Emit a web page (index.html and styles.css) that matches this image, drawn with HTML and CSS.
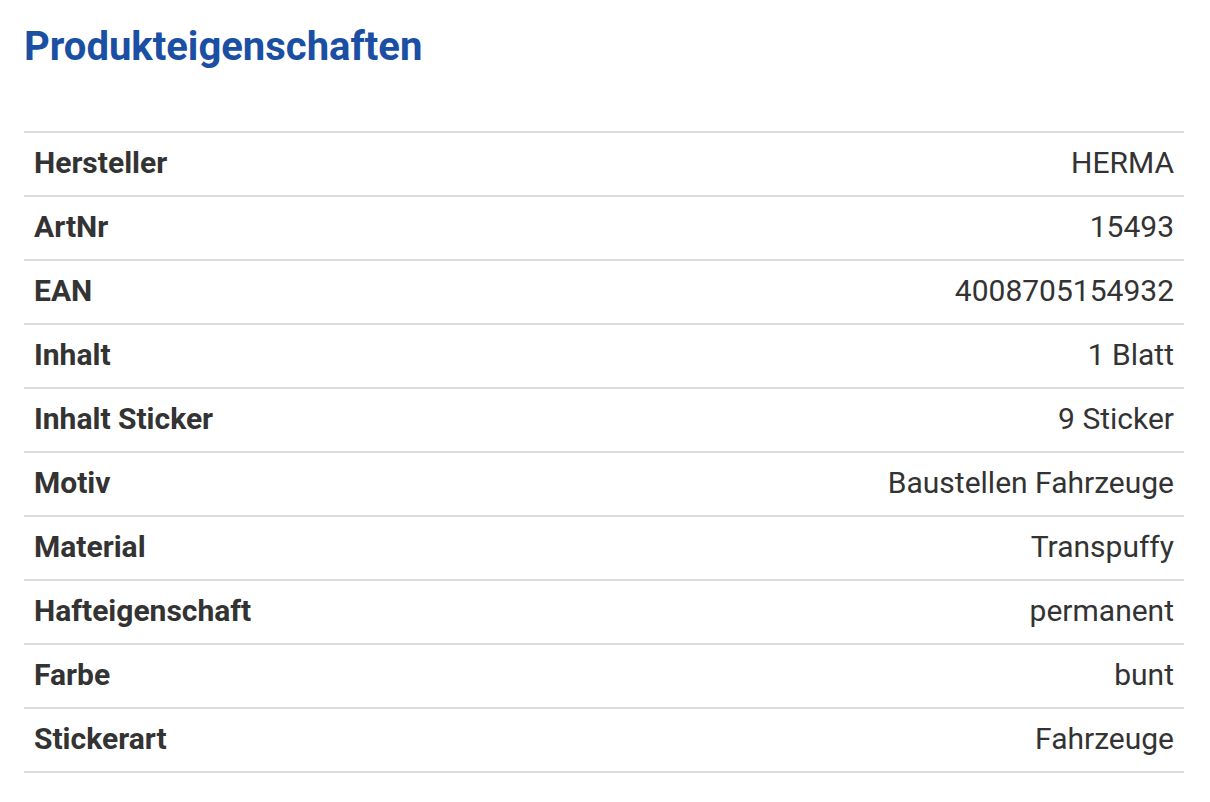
FILE: index.html
```html
<!DOCTYPE html>
<html lang="de">
<head>
<meta charset="utf-8">
<title>Produkteigenschaften</title>
<link rel="stylesheet" href="styles.css">
</head>
<body>
<section class="props">
  <h1 class="props-title">Produkteigenschaften</h1>
  <table class="props-table">
    <tbody>
      <tr><th>Hersteller</th><td>HERMA</td></tr>
      <tr><th>ArtNr</th><td>15493</td></tr>
      <tr><th>EAN</th><td>4008705154932</td></tr>
      <tr><th>Inhalt</th><td>1 Blatt</td></tr>
      <tr><th>Inhalt Sticker</th><td>9 Sticker</td></tr>
      <tr><th>Motiv</th><td>Baustellen Fahrzeuge</td></tr>
      <tr><th>Material</th><td>Transpuffy</td></tr>
      <tr><th>Hafteigenschaft</th><td>permanent</td></tr>
      <tr><th>Farbe</th><td>bunt</td></tr>
      <tr><th>Stickerart</th><td>Fahrzeuge</td></tr>
    </tbody>
  </table>
</section>
</body>
</html>
```
FILE: styles.css
```css
html, body {
  margin: 0;
  padding: 0;
  background: #fff;
}
body {
  font-family: Roboto, "Liberation Sans", Arial, sans-serif;
  color: #333;
}
.props {
  padding: 23px 26px 0 24px;
}
.props-title {
  margin: 0 0 60px 0;
  font-size: 40px;
  line-height: 48px;
  font-weight: 700;
  color: #1a4fa3;
}
.props-table {
  width: 100%;
  border-collapse: collapse;
  border-top: 2px solid #dddddd;
}
.props-table tr {
  border-bottom: 2px solid #dddddd;
}
.props-table th,
.props-table td {
  height: 60px;
  padding: 0 10px 2px;
  font-size: 30px;
  line-height: 36px;
  vertical-align: middle;
}
.props-table th {
  text-align: left;
  font-weight: 700;
}
.props-table td {
  text-align: right;
  font-weight: 400;
}
```
